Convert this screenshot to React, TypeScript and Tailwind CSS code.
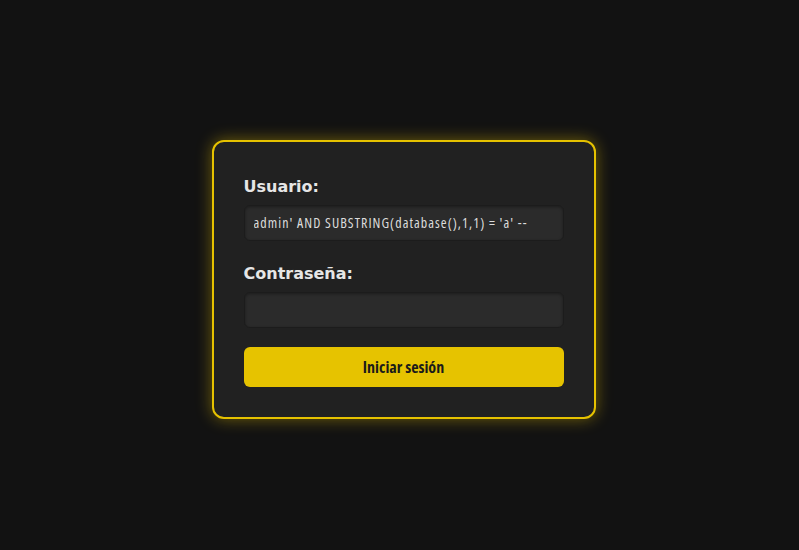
import * as React from 'react';

export default function App() {
  return (
    <div className="flex h-[550px] w-full items-center justify-center bg-[#121212] pl-[8px] pt-[8px]">
      <form
        className="w-[384px] rounded-[12px] border-2 border-[#e6c200] bg-[#212121] p-[30px] shadow-[0_0_16px_rgba(230,194,0,0.45)]"
        onSubmit={e => e.preventDefault()}
      >
        {/* Usuario */}
        <label className="mt-[3px] mb-[6px] block font-['DejaVu_Sans',sans-serif] text-[16px] leading-6 font-bold text-[#e6e6e6]">
          Usuario:
        </label>
        <input
          type="text"
          defaultValue="admin' AND SUBSTRING(database(),1,1) = 'a' --"
          className="block h-9 w-full rounded-[6px] border border-[#1c1c1c] bg-[#2b2b2b] px-[9px] font-['Open_Sans',sans-serif] text-[14px] font-stretch-condensed tracking-[1.05px] text-[#dcdcdc] shadow-[inset_0_1px_3px_rgba(0,0,0,0.35)] outline-none"
        />

        {/* Contraseña */}
        <label className="mt-[21px] mb-[6px] block font-['DejaVu_Sans',sans-serif] text-[16px] leading-6 font-bold text-[#e6e6e6]">
          Contraseña:
        </label>
        <input
          type="password"
          className="block h-9 w-full rounded-[6px] border border-[#1c1c1c] bg-[#2b2b2b] px-[9px] font-['Open_Sans',sans-serif] text-[14px] font-stretch-condensed text-[#dcdcdc] shadow-[inset_0_1px_3px_rgba(0,0,0,0.35)] outline-none"
        />

        <button
          type="submit"
          className="mt-[19px] block h-10 w-full rounded-[6px] bg-[#e6c300] font-['Open_Sans',sans-serif] text-[16px] font-bold font-stretch-condensed text-[#1a1a1a]"
        >
          Iniciar sesión
        </button>
      </form>
    </div>
  );
}
